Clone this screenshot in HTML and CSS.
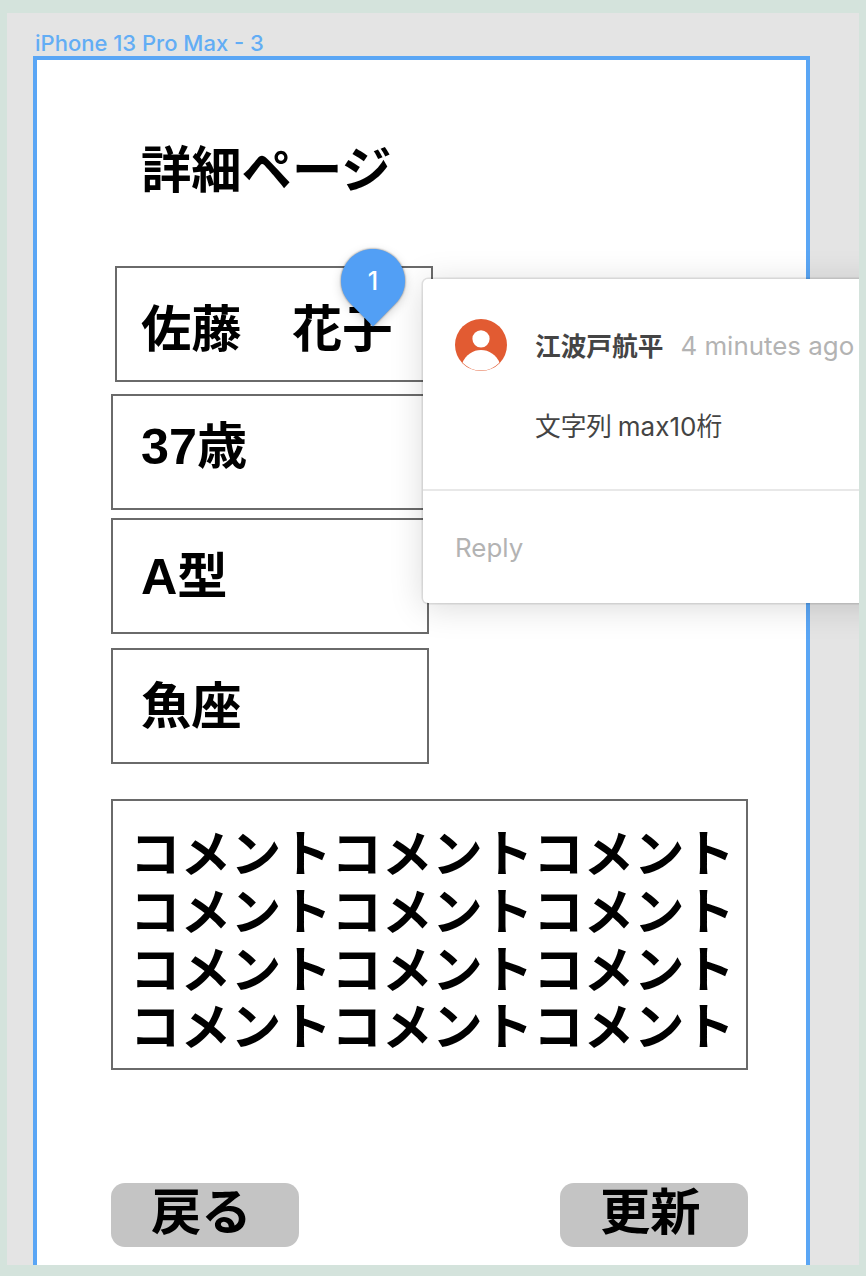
FILE: index.html
```html
<!DOCTYPE html>
<html lang="ja">
<head>
<meta charset="utf-8">
<title>詳細ページ</title>
<link rel="stylesheet" href="styles.css">
</head>
<body>
<div class="canvas">
  <div class="frame-label"><span class="frame-label-text">iPhone 13 Pro Max - 3</span></div>
  <main class="frame">
    <h1 class="title">詳細ページ</h1>
    <div class="field field-name">佐藤　花子</div>
    <div class="field field-age">37歳</div>
    <div class="field field-blood">A型</div>
    <div class="field field-sign">魚座</div>
    <div class="comments">
      <div>コメントコメントコメント</div>
      <div>コメントコメントコメント</div>
      <div>コメントコメントコメント</div>
      <div>コメントコメントコメント</div>
    </div>
    <div class="actions">
      <button class="btn btn-back">戻る</button>
      <button class="btn btn-update">更新</button>
    </div>
  </main>
  <section class="popover">
    <div class="thread">
      <svg class="avatar" viewBox="0 0 52 52">
        <defs><clipPath id="disc"><circle cx="26" cy="26" r="25.6"/></clipPath></defs>
        <circle cx="26" cy="26" r="26" fill="#e25b32"/>
        <g clip-path="url(#disc)" fill="#fff">
          <circle cx="26" cy="19.8" r="8.6"/>
          <path d="M7 44.5C11 35.500 18 31 26 31S41 35.500 45 44.500L38 52H14Z"/>
        </g>
      </svg>
      <div class="message">
        <div class="meta"><span class="author">江波戸航平</span><span class="time">4 minutes ago</span></div>
        <div class="body">文字列 <span class="latin">max10</span>桁</div>
      </div>
    </div>
    <div class="reply"><span class="reply-text">Reply</span></div>
  </section>
  <div class="pin">
    <svg class="pin-shape" viewBox="0 0 66 80">
      <path d="M33 1C15.300 1 1 15.300 1 33C1 42 4.700 49.500 10.500 55.500L33 78.500L55.500 55.500C61.300 49.500 65 42 65 33C65 15.300 50.700 1 33 1Z" fill="#529ff5"/>
    </svg>
    <span class="pin-number">1</span>
  </div>
</div>
</body>
</html>
```
FILE: styles.css
```css
* { box-sizing: border-box; }

body {
  margin: 0;
  padding: 13px 7px 11px;
  height: 1276px;
  overflow: hidden;
  background: #d4e3dc;
}

.canvas {
  position: relative;
  height: 1252px;
  overflow: hidden;
  background: #e4e4e4;
  font-family: "Liberation Sans", "Noto Sans CJK JP", sans-serif;
}

.frame-label {
  height: 43px;
  padding: 16px 0 0 28px;
  font: 500 22px/28px Inter, sans-serif;
  color: #62adf5;
  white-space: nowrap;
}

.frame {
  width: 777px;
  height: 1240px;
  margin-left: 26px;
  padding: 82px 0 0 74px;
  border: 4px solid #5aa6f5;
  background: #fff;
  color: #000;
  font-size: 50.300px;
  font-weight: 700;
  line-height: 58px;
  white-space: nowrap;
}

.title {
  margin: 0 0 66px;
  padding-left: 30px;
  font: inherit;
}

.field {
  width: 318px;
  height: 116px;
  border: 2px solid #6a6a6a;
  padding-left: 28px;
}

.field-name { margin-left: 4px; padding-top: 33px; padding-left: 24px; }
.field-age { margin-top: 12px; padding-top: 22px; }
.field-blood { margin-top: 8px; padding-top: 28px; }
.field-sign { margin-top: 14px; padding-top: 28px; }

.comments {
  width: 637px;
  height: 271px;
  margin-top: 35px;
  padding: 25px 0 0 17px;
  border: 2px solid #6a6a6a;
  font-size: 50.400px;
  line-height: 57.800px;
}

.actions {
  display: flex;
  justify-content: space-between;
  width: 637px;
  margin-top: 113px;
}

.btn {
  width: 188px;
  height: 64px;
  padding: 0 0 5px 40px;
  border: 0;
  border-radius: 14px;
  background: #c4c4c4;
  color: #000;
  font: inherit;
  text-align: left;
}

.popover {
  position: absolute;
  left: 416px;
  top: 266px;
  width: 480px;
  height: 324px;
  border-radius: 5px;
  background: #fff;
  box-shadow: 0 0 0 1.500px rgba(0, 0, 0, .1), 0 4px 34px rgba(0, 0, 0, .15);
  white-space: nowrap;
}

.thread {
  display: flex;
  gap: 28px;
  height: 212px;
  padding: 40px 0 0 32px;
  border-bottom: 2px solid #e8e8e8;
}

.avatar { width: 52px; height: 52px; }

.meta {
  display: flex;
  gap: 17px;
  height: 52px;
  align-items: center;
}

.author {
  font: 700 25.700px/36px "Noto Sans CJK JP", sans-serif;
  color: #444;
}

.time {
  padding-top: 2px;
  font: 400 25.900px/36px Inter, sans-serif;
  color: #b3b3b3;
}

.body {
  margin-top: 36px;
  font: 400 25.700px/36px "Noto Sans CJK JP", sans-serif;
  color: #444;
}

.latin { font-family: Inter, sans-serif; font-size: 26px; }

.reply {
  padding: 39px 0 0 32px;
  font: 400 25.900px/36px Inter, sans-serif;
  color: #b3b3b3;
}

.pin {
  position: absolute;
  left: 333px;
  top: 235px;
  width: 66px;
  height: 80px;
  padding-top: 17px;
  color: #fff;
  font: 500 25px/32px Inter, sans-serif;
  text-align: center;
}

.pin-shape {
  position: absolute;
  left: 0;
  top: 0;
  width: 66px;
  height: 80px;
  overflow: visible;
  filter: drop-shadow(0 0 1px rgba(0, 0, 0, .5)) drop-shadow(0 3px 5px rgba(0, 0, 0, .16));
}

.pin-number { position: relative; }
```
